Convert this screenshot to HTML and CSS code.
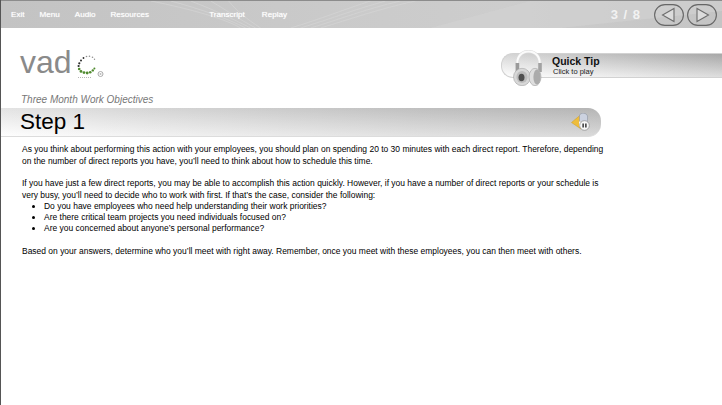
FILE: index.html
```html
<!DOCTYPE html>
<html lang="en">
<head>
<meta charset="utf-8">
<title>Three Month Work Objectives</title>
<link rel="stylesheet" href="styles.css">
</head>
<body>
<div class="page">
  <header class="toolbar">
    <svg class="swirl" viewBox="0 0 722 27" preserveAspectRatio="none" aria-hidden="true">
      <g fill="none" stroke="#d6d6d6" stroke-width=".6">
        <path d="M150 0C190 8 225 18 240 27M170 0C200 8 228 18 245 27M190 0C212 8 232 18 250 27M210 0C224 8 238 18 255 27M228 0C236 10 246 18 260 27"/>
        <path d="M290 27C320 18 345 8 370 0M300 27C330 18 355 8 385 0M310 27C340 18 365 8 400 0M320 27C350 18 378 8 415 0"/>
      </g>
      <path d="M430 27L530 0L722 0L722 10L560 27Z" fill="#d3d3d3" opacity=".55"/>
    </svg>
    <nav class="nav nav-main">
      <span>Exit</span><span>Menu</span><span>Audio</span><span>Resources</span>
    </nav>
    <nav class="nav nav-side">
      <span>Transcript</span><span>Replay</span>
    </nav>
    <div class="pager">
      <span class="count">3 / 8</span>
      <svg class="arrow" viewBox="0 0 30 22" aria-hidden="true">
        <rect x=".6" y=".6" width="28.8" height="20.8" rx="10.4" fill="none" stroke="#666" stroke-width="1.1"/>
        <path d="M20 4.5V17.5L8.5 11Z" fill="#dcdcdc" stroke="#6d6d6d" stroke-width="1.1"/>
      </svg>
      <svg class="arrow" viewBox="0 0 30 22" aria-hidden="true">
        <rect x=".6" y=".6" width="28.8" height="20.8" rx="10.4" fill="none" stroke="#666" stroke-width="1.1"/>
        <path d="M10 4.5V17.5L21.5 11Z" fill="#dcdcdc" stroke="#6d6d6d" stroke-width="1.1"/>
      </svg>
    </div>
  </header>

  <section class="masthead">
    <div class="brand">
      <div class="logo">
        <span class="logo-text">vad</span>
        <svg class="logo-mark" viewBox="0 0 30 26" aria-hidden="true">
          <g fill="#2c2c2c">
            <circle cx="7" cy="6.500" r="1"/><circle cx="9.500" cy="4" r=".9"/><circle cx="5.300" cy="9.300" r="1.100"/><circle cx="4.600" cy="12" r="1.100"/>
          </g>
          <g fill="#8f8f8f">
            <circle cx="12.500" cy="2.500" r=".8"/><circle cx="15.500" cy="2.200" r=".8"/><circle cx="18.500" cy="3.200" r=".8"/><circle cx="20.500" cy="5.200" r=".7"/>
          </g>
          <g fill="#4f8a2e">
            <circle cx="5.200" cy="15" r="1.300"/><circle cx="7" cy="17.400" r="1.400"/><circle cx="10" cy="18.600" r="1.400"/><circle cx="13.200" cy="19" r="1.400"/><circle cx="16.200" cy="18.200" r="1.300"/><circle cx="18.800" cy="16.400" r="1.200"/><circle cx="20.400" cy="14.400" r="1"/>
          </g>
          <path d="M4 23.500H17" stroke="#b5b5b5" stroke-dasharray="1 1"/>
          <circle cx="26.500" cy="20" r="2.500" fill="none" stroke="#aaa"/>
          <circle cx="26.500" cy="20" r="1" fill="#bbb"/>
        </svg>
      </div>
      <p class="subtitle">Three Month Work Objectives</p>
    </div>
    <div class="quicktip">
      <svg class="phones" viewBox="0 0 31 36" aria-hidden="true">
        <path d="M5 17C2 7 9 1.500 15.500 1.500S29 7 26 17" fill="none" stroke="#dcdcdc" stroke-width="3.200"/>
        <path d="M5 17C2 7 9 1.500 15.500 1.500S29 7 26 17" fill="none" stroke="#fbfbfb" stroke-width="2"/>
        <rect x="2.600" y="13" width="3.600" height="9" fill="#9a9a9a"/>
        <rect x="25.200" y="13" width="3.600" height="9" fill="#a2a2a2"/>
        <ellipse cx="9" cy="27" rx="8.500" ry="8.700" fill="#d8d8d8" stroke="#a5a5a5" stroke-width=".6"/>
        <ellipse cx="9" cy="27" rx="5.600" ry="6" fill="#bdbdbd"/>
        <ellipse cx="8.500" cy="27.500" rx="3" ry="3.800" fill="#4f4f4f"/>
        <ellipse cx="22" cy="27" rx="6" ry="8.700" fill="#dedede" stroke="#a0a0a0" stroke-width=".6"/>
        <ellipse cx="24" cy="27" rx="3.600" ry="7.600" fill="#ababab"/>
      </svg>
      <div class="tip-text">
        <strong class="tip-title">Quick Tip</strong>
        <span class="tip-sub">Click to play</span>
      </div>
    </div>
  </section>

  <section class="stepbar">
    <h1 class="step-title">Step 1</h1>
    <svg class="speaker" viewBox="0 0 19 18" aria-hidden="true">
      <path d="M.5 9.500L10 1.500V16Z" fill="#eebd3c" stroke="#cf9d20" stroke-width=".5"/>
      <path d="M8.500 2C10 -.5 15.500 -.5 16.500 3V8.500H8.500Z" fill="#ccd2e0" stroke="#8f95a3" stroke-width=".6"/>
      <path d="M8 8.500H12.500V13.500H8Z" fill="#f6f6f6"/>
      <circle cx="13.500" cy="12.500" r="4.800" fill="#f8f8f8" stroke="#8a8a8a" stroke-width=".7"/>
      <rect x="11.300" y="10.500" width="1.700" height="4" fill="#4d4d4d"/>
      <rect x="14" y="10.500" width="1.700" height="4" fill="#4d4d4d"/>
    </svg>
  </section>

  <main class="content">
    <p>As you think about performing this action with your employees, you should plan on spending 20 to 30 minutes with each direct report. Therefore, depending<br>on the number of direct reports you have, you’ll need to think about how to schedule this time.</p>
    <p>If you have just a few direct reports, you may be able to accomplish this action quickly. However, if you have a number of direct reports or your schedule is<br>very busy, you’ll need to decide who to work with first. If that’s the case, consider the following:</p>
    <ul>
      <li>Do you have employees who need help understanding their work priorities?</li>
      <li>Are there critical team projects you need individuals focused on?</li>
      <li>Are you concerned about anyone’s personal performance?</li>
    </ul>
    <p class="last">Based on your answers, determine who you’ll meet with right away. Remember, once you meet with these employees, you can then meet with others.</p>
  </main>
</div>
</body>
</html>
```
FILE: styles.css
```css
* { box-sizing: border-box; }
html, body { margin: 0; height: 100%; background: #fff; overflow: hidden; }
body { font-family: "Liberation Sans", Arial, sans-serif; color: #111; }

.page {
  width: 722px;
  height: 405px;
  display: flex;
  flex-direction: column;
  border-left: 1px solid #555;
}

.toolbar {
  position: relative;
  flex: 0 0 28px;
  display: flex;
  align-items: center;
  padding-left: 10px;
  border-top: 1px solid #8c8c8c;
  background: linear-gradient(90deg, #c3c3c3 0%, #cacaca 45%, #cdcdcd 70%, #c4c4c4 100%);
}
.swirl { position: absolute; left: 0; top: 0; width: 100%; height: 100%; }
.nav {
  position: relative;
  display: flex;
  font-size: 8.1px;
  color: #fff;
  text-shadow: 0 0 1px rgba(255,255,255,.8);
}
.nav-main { gap: 15px; }
.nav-side { gap: 17px; margin-left: 60px; }

.pager {
  position: relative;
  display: flex;
  align-items: center;
  margin-left: auto;
  padding-right: 5px;
  gap: 3px;
}
.count {
  font-size: 13px;
  font-weight: bold;
  letter-spacing: 1px;
  color: #f2f2f2;
  margin-right: 10px;
}
.arrow { width: 30px; height: 22px; display: block; }

.masthead {
  display: flex;
  justify-content: space-between;
  align-items: flex-start;
  height: 80px;
}
.brand { padding: 14px 0 0 19px; }
.logo { display: flex; align-items: flex-start; height: 45px; }
.logo-text {
  font-size: 32px;
  line-height: 40px;
  color: #8a8a8a;
}
.logo-mark { width: 30px; height: 26px; margin: 12px 0 0 2px; }
.subtitle {
  margin: 7px 0 0 1px;
  font-size: 10px;
  line-height: 12px;
  font-style: italic;
  color: #777;
}

.quicktip {
  position: relative;
  margin-top: 25px;
  width: 221px;
  height: 25px;
  padding-left: 50px;
  border: 1px solid #d2d2d2;
  border-right: 0;
  border-radius: 12px 0 0 12px;
  background-image:
    linear-gradient(180deg, rgba(0,0,0,.16) 0%, rgba(255,255,255,.4) 100%),
    linear-gradient(90deg, #fff 0%, #f8f8f8 12%, #dedede 60%, #c8c8c8 100%);
}
.phones { position: absolute; left: 11px; top: -4px; width: 31px; height: 36px; }
.tip-text { display: flex; flex-direction: column; padding-top: 1px; }
.tip-title { font-size: 10.5px; line-height: 13px; color: #111; }
.tip-sub { font-size: 7.5px; line-height: 8px; color: #222; padding-left: 1px; }

.stepbar {
  display: flex;
  align-items: center;
  justify-content: space-between;
  width: 600px;
  height: 29px;
  padding: 0 11px 0 19px;
  border-radius: 0 13px 13px 0;
  border-bottom: 1px solid #dcdcdc;
  background-image:
    linear-gradient(180deg, rgba(0,0,0,.1) 0%, rgba(255,255,255,.3) 100%),
    linear-gradient(90deg, #fdfdfd 0%, #ededed 25%, #d5d5d5 70%, #c9c9c9 100%);
}
.step-title { margin: 0; font-size: 22.5px; font-weight: normal; color: #000; }
.speaker { width: 19px; height: 18px; }

.content {
  padding: 7.4px 0 0 21px;
  width: 620px;
  font-size: 8.48px;
  line-height: 11.3px;
  color: #000;
}
.content p { margin: 0 0 11.3px; white-space: nowrap; }
.content p:nth-of-type(2) { margin-bottom: 0; }
.content ul { margin: 0 0 11.3px; padding: 0 0 0 22px; }
.content li { padding: 0; }
.content .last { margin: 0; }
```
